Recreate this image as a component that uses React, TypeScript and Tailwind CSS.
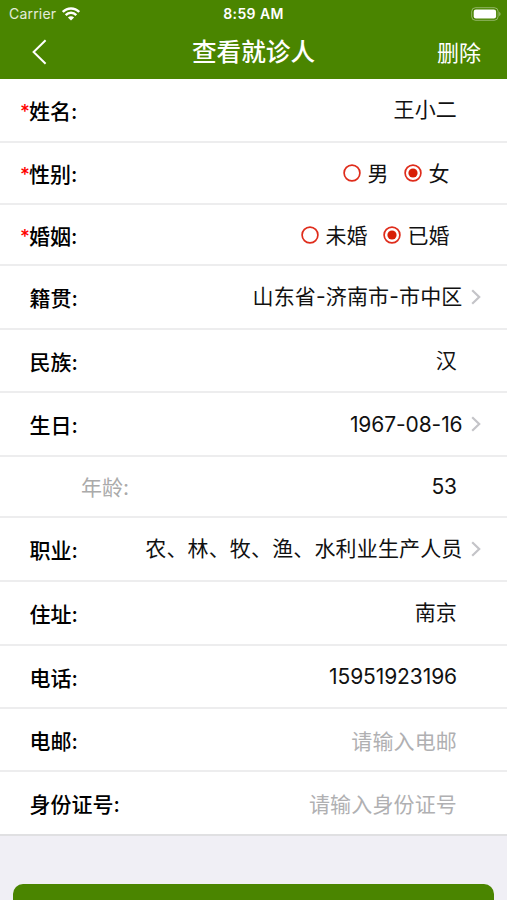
import { ReactNode } from 'react';
import { clsx } from 'clsx';

interface Field {
  label: string;
  height: string;
  value?: string;
  placeholder?: string;
  required?: boolean;
  link?: boolean;
  sub?: boolean;
  numeric?: boolean;
  options?: string[];
  selected?: string;
}

const fields: Field[] = [
  { label: '姓名', height: 'h-[64px]', value: '王小二', required: true },
  { label: '性别', height: 'h-[62px]', required: true, options: ['男', '女'], selected: '女' },
  { label: '婚姻', height: 'h-[61px]', required: true, options: ['未婚', '已婚'], selected: '已婚' },
  { label: '籍贯', height: 'h-[64px]', value: '山东省-济南市-市中区', link: true },
  { label: '民族', height: 'h-[63px]', value: '汉' },
  { label: '生日', height: 'h-[64px]', value: '1967-08-16', link: true, numeric: true },
  { label: '年龄', height: 'h-[61px]', value: '53', sub: true, numeric: true },
  { label: '职业', height: 'h-[64px]', value: '农、林、牧、渔、水利业生产人员', link: true },
  { label: '住址', height: 'h-[64px]', value: '南京' },
  { label: '电话', height: 'h-[63px]', value: '15951923196', numeric: true },
  { label: '电邮', height: 'h-[63px]', placeholder: '请输入电邮' },
  { label: '身份证号', height: 'h-[64px]', placeholder: '请输入身份证号' },
];

function WifiIcon() {
  return (
    <svg className="ml-[6px] h-[14px] w-[18px]" viewBox="0 0 18 14" fill="none" stroke="white" strokeWidth="2.5">
      <path d="M0.8 4.9C5.3 0.2 12.7 0.2 17.2 4.9" />
      <path d="M3.7 8.1C6.7 5.1 11.3 5.1 14.3 8.1" />
      <path d="M9 13.6L5.9 10.4C7.6 8.8 10.4 8.8 12.1 10.4Z" fill="white" stroke="none" />
    </svg>
  );
}

function BatteryIcon() {
  return (
    <svg className="h-[14px] w-[30px]" viewBox="0 0 30 14" fill="none">
      <rect x="0.7" y="0.7" width="26.4" height="12.6" rx="3.8" stroke="white" strokeOpacity="0.4" />
      <rect x="2.7" y="2.5" width="22.4" height="9" rx="2.2" fill="white" />
      <path d="M28.3 4.8C29.9 5.6 29.9 8.4 28.3 9.2Z" fill="white" fillOpacity="0.5" />
    </svg>
  );
}

function Radio({ checked, children }: { checked: boolean; children: ReactNode }) {
  return (
    <div className="flex items-center gap-[7px]">
      <svg className="size-[18px]" viewBox="0 0 18 18" fill="none">
        <circle cx="9" cy="9" r="7.9" stroke="#df2c1b" strokeWidth="1.7" />
        {checked && <circle cx="9" cy="9" r="4.6" fill="#d81e06" />}
      </svg>
      <span className="pt-[2px]">{children}</span>
    </div>
  );
}

function FieldRow({ field }: { field: Field }) {
  return (
    <div
      className={clsx(
        'flex items-center justify-between border-b-2 border-[#ededee] bg-white text-[21px] leading-[30px] text-[#111] last:border-[#e0e0e2]',
        field.height,
        field.options ? 'pr-[57.5px]' : field.link ? 'pr-[26px]' : 'pr-[50px]',
      )}
    >
      <div
        className={clsx(
          'flex',
          field.sub ? 'pt-[3px] text-[#aaa]' : 'pt-[4px] font-medium text-black',
          field.required ? 'pl-[20px]' : field.sub ? 'pl-[81px]' : 'pl-[29.5px]',
        )}
      >
        {field.required && <span className="w-[9px] text-[19px] text-[#f00]">*</span>}
        <span>{field.label}:</span>
      </div>

      {field.options && (
        <div className="flex gap-[15px]">
          {field.options.map((option) => (
            <Radio key={option} checked={option === field.selected}>
              {option}
            </Radio>
          ))}
        </div>
      )}

      {field.value && (
        <div className="flex items-center">
          <span className={clsx(field.numeric ? 'pt-px tracking-[-0.1px]' : 'tracking-[0.15px]', field.sub && 'pt-[2px]')}>{field.value}</span>
          {field.link && (
            <svg className="ml-[8.5px] h-[16px] w-[10px]" viewBox="0 0 10 16" fill="none" stroke="#c4c4c8" strokeWidth="2.2">
              <path d="M1.2 1.2L8.2 8L1.2 14.8" />
            </svg>
          )}
        </div>
      )}

      {field.placeholder && <span className="pt-[4px] tracking-[0.15px] text-[#b0b0b2]">{field.placeholder}</span>}
    </div>
  );
}

export default function App() {
  return (
    <div className="flex h-[900px] w-[507px] flex-col overflow-hidden bg-[#f0eff5] font-['Inter','Noto_Sans_CJK_SC',sans-serif]">
      {/* Status bar */}
      <header className="h-[79px] shrink-0 bg-[#4a8500] text-white">
        <div className="grid h-[27px] grid-cols-3 items-center pr-[6px] pl-[9px] text-[14px]">
          <div className="flex items-center text-white/85">
            <span className="tracking-[0.2px]">Carrier</span>
            <WifiIcon />
          </div>
          <span className="pr-[3px] text-center font-semibold tracking-[0.4px]">8:59 AM</span>
          <div className="flex justify-end">
            <BatteryIcon />
          </div>
        </div>

        {/* Title bar */}
        <div className="grid h-[50px] grid-cols-3 items-center pr-[26px] pl-[32px]">
          <svg className="h-[26px] w-[15px]" viewBox="0 0 15 26" fill="none" stroke="white" strokeWidth="2">
            <path d="M13.6 1.2L1.6 13L13.6 24.8" />
          </svg>
          <h1 className="pr-[6px] text-center text-[24.6px] font-medium whitespace-nowrap">查看就诊人</h1>
          <span className="pt-[2px] text-right text-[22px]">删除</span>
        </div>
      </header>

      <main className="shrink-0">
        {fields.map((field) => (
          <FieldRow key={field.label} field={field} />
        ))}
      </main>

      <div className="shrink-0 px-[13px] pt-[48px]">
        <button className="block h-[60px] w-full rounded-[10px] bg-[#4a8500]" />
      </div>
    </div>
  );
}
